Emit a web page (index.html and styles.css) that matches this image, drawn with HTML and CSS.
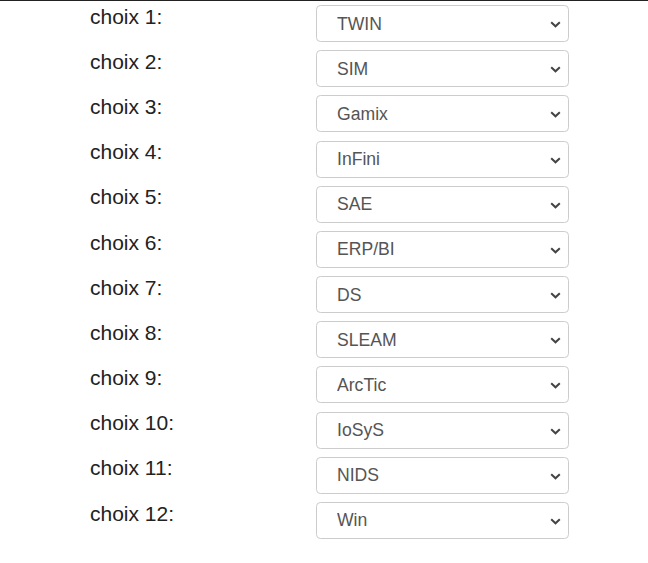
FILE: index.html
```html
<!DOCTYPE html>
<html lang="fr">
<head>
<meta charset="utf-8">
<title>Choix</title>
<link rel="stylesheet" href="styles.css">
</head>
<body>
<div class="form">
  <div class="row"><label class="lbl">choix 1:</label><div class="sel"><select class="ctl"><option>TWIN</option></select><svg class="chev" viewBox="0 0 11 7" width="11" height="7"><polyline points="1.2,1.2 5.5,5.3 9.8,1.2"/></svg></div></div>
  <div class="row"><label class="lbl">choix 2:</label><div class="sel"><select class="ctl"><option>SIM</option></select><svg class="chev" viewBox="0 0 11 7" width="11" height="7"><polyline points="1.2,1.2 5.5,5.3 9.8,1.2"/></svg></div></div>
  <div class="row"><label class="lbl">choix 3:</label><div class="sel"><select class="ctl"><option>Gamix</option></select><svg class="chev" viewBox="0 0 11 7" width="11" height="7"><polyline points="1.2,1.2 5.5,5.3 9.8,1.2"/></svg></div></div>
  <div class="row"><label class="lbl">choix 4:</label><div class="sel"><select class="ctl"><option>InFini</option></select><svg class="chev" viewBox="0 0 11 7" width="11" height="7"><polyline points="1.2,1.2 5.5,5.3 9.8,1.2"/></svg></div></div>
  <div class="row"><label class="lbl">choix 5:</label><div class="sel"><select class="ctl"><option>SAE</option></select><svg class="chev" viewBox="0 0 11 7" width="11" height="7"><polyline points="1.2,1.2 5.5,5.3 9.8,1.2"/></svg></div></div>
  <div class="row"><label class="lbl">choix 6:</label><div class="sel"><select class="ctl"><option>ERP/BI</option></select><svg class="chev" viewBox="0 0 11 7" width="11" height="7"><polyline points="1.2,1.2 5.5,5.3 9.8,1.2"/></svg></div></div>
  <div class="row"><label class="lbl">choix 7:</label><div class="sel"><select class="ctl"><option>DS</option></select><svg class="chev" viewBox="0 0 11 7" width="11" height="7"><polyline points="1.2,1.2 5.5,5.3 9.8,1.2"/></svg></div></div>
  <div class="row"><label class="lbl">choix 8:</label><div class="sel"><select class="ctl"><option>SLEAM</option></select><svg class="chev" viewBox="0 0 11 7" width="11" height="7"><polyline points="1.2,1.2 5.5,5.3 9.8,1.2"/></svg></div></div>
  <div class="row"><label class="lbl">choix 9:</label><div class="sel"><select class="ctl"><option>ArcTic</option></select><svg class="chev" viewBox="0 0 11 7" width="11" height="7"><polyline points="1.2,1.2 5.5,5.3 9.8,1.2"/></svg></div></div>
  <div class="row"><label class="lbl">choix 10:</label><div class="sel"><select class="ctl"><option>IoSyS</option></select><svg class="chev" viewBox="0 0 11 7" width="11" height="7"><polyline points="1.2,1.2 5.5,5.3 9.8,1.2"/></svg></div></div>
  <div class="row"><label class="lbl">choix 11:</label><div class="sel"><select class="ctl"><option>NIDS</option></select><svg class="chev" viewBox="0 0 11 7" width="11" height="7"><polyline points="1.2,1.2 5.5,5.3 9.8,1.2"/></svg></div></div>
  <div class="row"><label class="lbl">choix 12:</label><div class="sel"><select class="ctl"><option>Win</option></select><svg class="chev" viewBox="0 0 11 7" width="11" height="7"><polyline points="1.2,1.2 5.5,5.3 9.8,1.2"/></svg></div></div>
</div>
</body>
</html>
```
FILE: styles.css
```css
html, body {
  margin: 0;
  padding: 0;
  background: #fff;
}
body {
  font-family: "Liberation Sans", Arial, sans-serif;
  color: #222;
}
.form {
  border-top: 1px solid #222;
  padding-left: 90px;
}
.row {
  display: grid;
  grid-template-columns: 226px 253px;
  height: 45.18px;
  align-items: start;
}
.lbl {
  font-size: 21px;
  line-height: 23.1px;
  padding-top: 3.7px;
  color: #222;
}
.sel {
  position: relative;
  margin-top: 4px;
  width: 253px;
  height: 37px;
}
.ctl {
  display: block;
  -webkit-appearance: none;
  appearance: none;
  width: 253px;
  height: 37px;
  box-sizing: border-box;
  border: 1px solid #ccc;
  border-radius: 4.4px;
  background: #fff;
  color: #555;
  font-family: "Liberation Sans", Arial, sans-serif;
  font-size: 17.6px;
  padding: 0 30px 0 20px;
  margin: 0;
  outline: none;
}
.chev {
  position: absolute;
  left: 234px;
  top: 16px;
  pointer-events: none;
  fill: none;
  stroke: #444;
  stroke-width: 2;
}
```
